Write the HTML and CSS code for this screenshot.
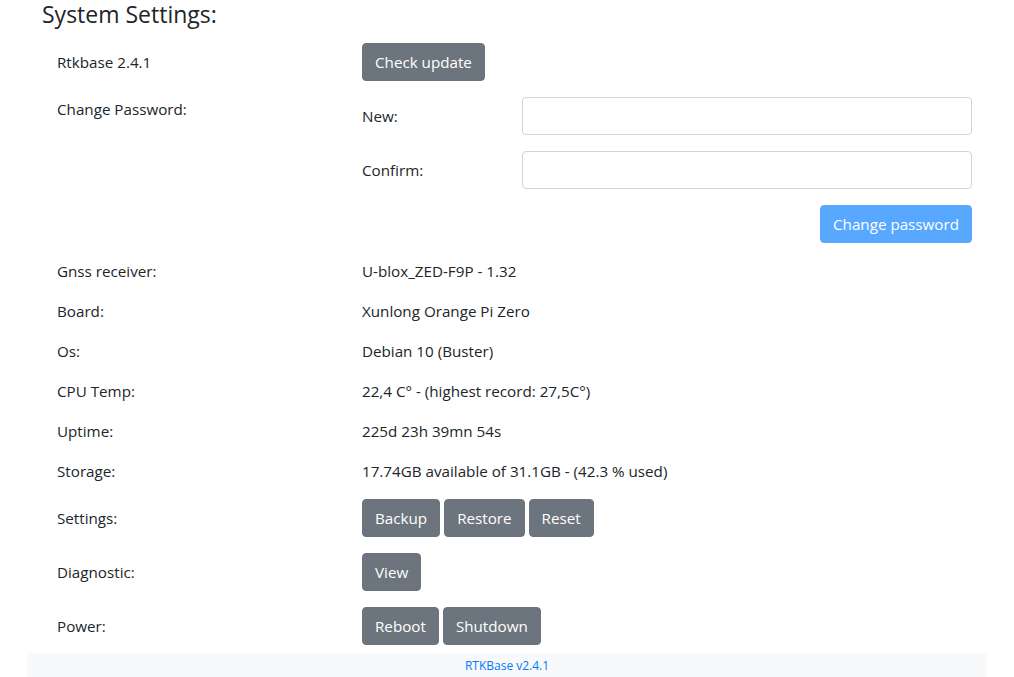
FILE: index.html
```html
<!DOCTYPE html>
<html lang="en">
<head>
<meta charset="utf-8">
<title>System Settings</title>
<link rel="stylesheet" href="styles.css">
</head>
<body>
<div class="container">
  <h4 class="title">System Settings:</h4>
  <div class="settings">
    <div class="row">
      <div class="label lbl-btn">Rtkbase 2.4.1</div>
      <div class="value"><button class="btn">Check update</button></div>
    </div>
    <div class="row">
      <div class="label">Change Password:</div>
      <div class="value pw">
        <div class="pw-row"><label class="lbl-btn">New:</label><input type="password" class="input"></div>
        <div class="pw-row"><label class="lbl-btn">Confirm:</label><input type="password" class="input"></div>
        <div class="pw-actions"><button class="btn btn-primary" disabled>Change password</button></div>
      </div>
    </div>
    <div class="row"><div class="label">Gnss receiver:</div><div class="value">U-blox_ZED-F9P - 1.32</div></div>
    <div class="row"><div class="label">Board:</div><div class="value">Xunlong Orange Pi Zero</div></div>
    <div class="row"><div class="label">Os:</div><div class="value">Debian 10 (Buster)</div></div>
    <div class="row"><div class="label">CPU Temp:</div><div class="value">22,4 C° - (highest record: 27,5C°)</div></div>
    <div class="row"><div class="label">Uptime:</div><div class="value">225d 23h 39mn 54s</div></div>
    <div class="row"><div class="label">Storage:</div><div class="value">17.74GB available of 31.1GB - (42.3 % used)</div></div>
    <div class="row">
      <div class="label lbl-btn">Settings:</div>
      <div class="value btns"><button class="btn">Backup</button><button class="btn">Restore</button><button class="btn">Reset</button></div>
    </div>
    <div class="row">
      <div class="label lbl-btn">Diagnostic:</div>
      <div class="value btns"><button class="btn">View</button></div>
    </div>
    <div class="row">
      <div class="label lbl-btn">Power:</div>
      <div class="value btns"><button class="btn">Reboot</button><button class="btn">Shutdown</button></div>
    </div>
  </div>
  <footer class="footer"><a class="footer-link" href="#">RTKBase v2.4.1</a></footer>
</div>
</body>
</html>
```

FILE: styles.css
```css
* { box-sizing: border-box; }
html, body { margin: 0; padding: 0; background: #fff; }
body {
  font-family: "Open Sans", "Noto Sans", sans-serif;
  font-size: 15.2px;
  line-height: 24px;
  color: #212529;
}
.container {
  width: 960px;
  margin: 0 auto;
}
.title {
  margin: 0 0 14px 15px;
  font-size: 23px;
  line-height: 29px;
  font-weight: 400;
}
.settings {
  display: flex;
  flex-direction: column;
  gap: 16px;
}
.row {
  display: grid;
  grid-template-columns: 320px 1fr;
}
.label { padding-left: 30px; }
.value { padding: 0 15px; }
.lbl-btn { padding-top: 7px; padding-bottom: 7px; }
.btns { display: flex; gap: 4px; }
.btn {
  font: inherit;
  height: 38px;
  padding: 6px 12px;
  border: 1px solid #6c757d;
  background: #6c757d;
  color: #fff;
  border-radius: 4px;
  line-height: 24px;
}
.btn-primary {
  background: #007bff;
  border-color: #007bff;
  opacity: .65;
}
.pw { display: flex; flex-direction: column; gap: 16px; }
.pw-row {
  display: grid;
  grid-template-columns: 160px 1fr;
}
.input {
  height: 38px;
  border: 1px solid #ced4da;
  border-radius: 4px;
  padding: 6px 12px;
  font: inherit;
  width: 100%;
}
.pw-actions { display: flex; justify-content: flex-end; }
.footer {
  margin-top: 8px;
  background: #f8f9fa;
  height: 30px;
  text-align: center;
  font-size: 12px;
  line-height: 26px;
}
.footer-link { color: #007bff; text-decoration: none; }
```
